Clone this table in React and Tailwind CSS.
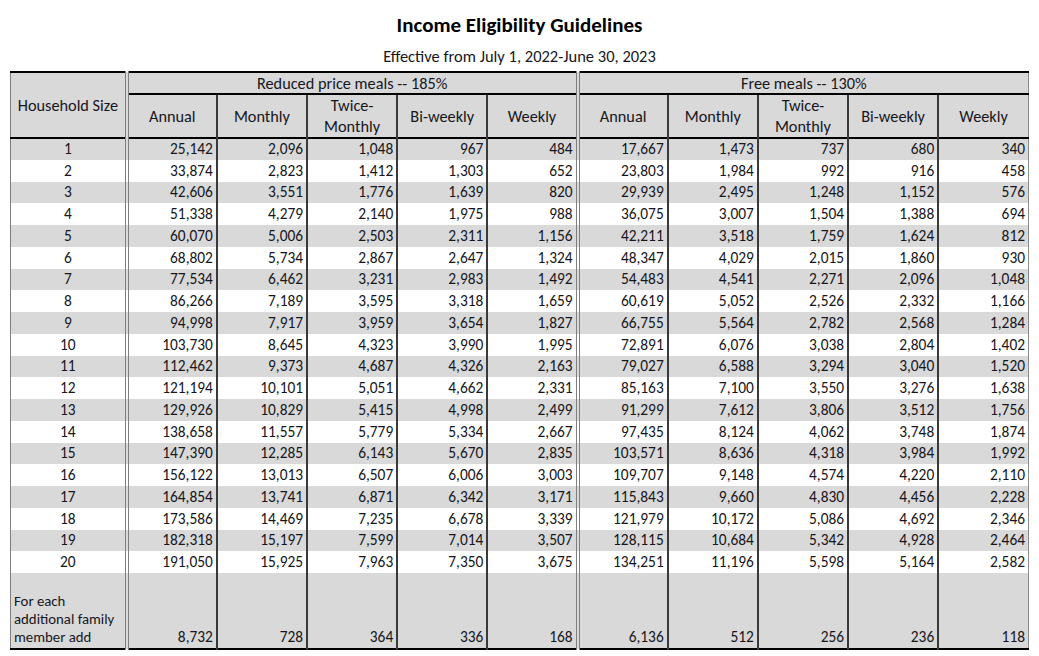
import React from "react";

const ROWS = [
  ["25,142", "2,096", "1,048", "967", "484", "17,667", "1,473", "737", "680", "340"],
  ["33,874", "2,823", "1,412", "1,303", "652", "23,803", "1,984", "992", "916", "458"],
  ["42,606", "3,551", "1,776", "1,639", "820", "29,939", "2,495", "1,248", "1,152", "576"],
  ["51,338", "4,279", "2,140", "1,975", "988", "36,075", "3,007", "1,504", "1,388", "694"],
  ["60,070", "5,006", "2,503", "2,311", "1,156", "42,211", "3,518", "1,759", "1,624", "812"],
  ["68,802", "5,734", "2,867", "2,647", "1,324", "48,347", "4,029", "2,015", "1,860", "930"],
  ["77,534", "6,462", "3,231", "2,983", "1,492", "54,483", "4,541", "2,271", "2,096", "1,048"],
  ["86,266", "7,189", "3,595", "3,318", "1,659", "60,619", "5,052", "2,526", "2,332", "1,166"],
  ["94,998", "7,917", "3,959", "3,654", "1,827", "66,755", "5,564", "2,782", "2,568", "1,284"],
  ["103,730", "8,645", "4,323", "3,990", "1,995", "72,891", "6,076", "3,038", "2,804", "1,402"],
  ["112,462", "9,373", "4,687", "4,326", "2,163", "79,027", "6,588", "3,294", "3,040", "1,520"],
  ["121,194", "10,101", "5,051", "4,662", "2,331", "85,163", "7,100", "3,550", "3,276", "1,638"],
  ["129,926", "10,829", "5,415", "4,998", "2,499", "91,299", "7,612", "3,806", "3,512", "1,756"],
  ["138,658", "11,557", "5,779", "5,334", "2,667", "97,435", "8,124", "4,062", "3,748", "1,874"],
  ["147,390", "12,285", "6,143", "5,670", "2,835", "103,571", "8,636", "4,318", "3,984", "1,992"],
  ["156,122", "13,013", "6,507", "6,006", "3,003", "109,707", "9,148", "4,574", "4,220", "2,110"],
  ["164,854", "13,741", "6,871", "6,342", "3,171", "115,843", "9,660", "4,830", "4,456", "2,228"],
  ["173,586", "14,469", "7,235", "6,678", "3,339", "121,979", "10,172", "5,086", "4,692", "2,346"],
  ["182,318", "15,197", "7,599", "7,014", "3,507", "128,115", "10,684", "5,342", "4,928", "2,464"],
  ["191,050", "15,925", "7,963", "7,350", "3,675", "134,251", "11,196", "5,598", "5,164", "2,582"],
];

const EXTRA = ["8,732", "728", "364", "336", "168", "6,136", "512", "256", "236", "118"];

const HEADS = ["Annual", "Monthly", "Twice-Monthly", "Bi-weekly", "Weekly"];

// border on the right of each of the 10 value columns
const sideBorder = (i) => {
  if (i === 4) return "border-r-4 border-double border-r-[#7f7f7f]";
  if (i === 9) return "border-r border-r-[#8c8c8c]";
  return "border-r-2 border-r-[#3a3a3a]";
};

const HeadCell = ({ label, i }) => (
  <th className={`${sideBorder(i)} p-0 font-normal text-center align-middle text-[16.3px] leading-[21px]`}>
    {label === "Twice-Monthly" ? (
      <>
        Twice-
        <br />
        Monthly
      </>
    ) : (
      label
    )}
  </th>
);

export default function App() {
  return (
    <div className="min-h-screen bg-white font-[Carlito,Lato,sans-serif] text-[#16161c]">
      <div className="pt-[11px] text-center">
        <h1 className="text-[21px] font-bold leading-[28px] text-black">Income Eligibility Guidelines</h1>
        <p className="mt-[7px] text-[16.5px] leading-[20px]">Effective from July 1, 2022-June 30, 2023</p>
      </div>

      <table className="ml-[10px] mt-[5px] w-[1019px] table-fixed border-collapse text-[15.4px] border-t-2 border-t-black border-b-2 border-b-black border-l border-l-[#7f7f7f]">
        <colgroup>
          <col className="w-[116px]" />
          {Array.from({ length: 10 }).map((_, i) => (
            <col key={i} className="w-[90px]" />
          ))}
        </colgroup>
        <thead className="bg-[#d9d9d9]">
          <tr className="h-[22px]">
            <th
              rowSpan={2}
              className="border-r-4 border-double border-r-[#7f7f7f] border-b-2 border-b-black p-0 font-normal text-center align-middle text-[16.3px] leading-[20px]"
            >
              Household Size
            </th>
            <th
              colSpan={5}
              className="border-r-4 border-double border-r-[#7f7f7f] border-b-2 border-b-black p-0 font-normal text-center text-[16.3px] leading-[19px]"
            >
              Reduced price meals -- 185%
            </th>
            <th
              colSpan={5}
              className="border-r border-r-[#8c8c8c] border-b-2 border-b-black p-0 font-normal text-center text-[16.3px] leading-[19px]"
            >
              Free meals -- 130%
            </th>
          </tr>
          <tr className="h-[43px] border-b-2 border-b-black">
            {HEADS.map((h, i) => (
              <HeadCell key={"r" + i} label={h} i={i} />
            ))}
            {HEADS.map((h, i) => (
              <HeadCell key={"f" + i} label={h} i={i + 5} />
            ))}
          </tr>
        </thead>
        <tbody>
          {ROWS.map((row, r) => (
            <tr key={r} className={`h-[21.75px] ${r % 2 === 0 ? "bg-[#d9d9d9]" : "bg-white"}`}>
              <td className="border-r-4 border-double border-r-[#7f7f7f] p-0 text-center leading-[18px]">{r + 1}</td>
              {row.map((v, i) => (
                <td key={i} className={`${sideBorder(i)} p-0 text-right pr-[3px] leading-[18px]`}>
                  {v}
                </td>
              ))}
            </tr>
          ))}
          <tr className="h-[76px] bg-[#d9d9d9]">
            <td className="border-r-4 border-double border-r-[#7f7f7f] p-0 pl-[3px] pb-[2px] align-bottom leading-[18px] text-[14.8px]">
              For each
              <br />
              additional family
              <br />
              member add
            </td>
            {EXTRA.map((v, i) => (
              <td key={i} className={`${sideBorder(i)} p-0 text-right pr-[3px] pb-[2px] align-bottom leading-[18px]`}>
                {v}
              </td>
            ))}
          </tr>
        </tbody>
      </table>
    </div>
  );
}
